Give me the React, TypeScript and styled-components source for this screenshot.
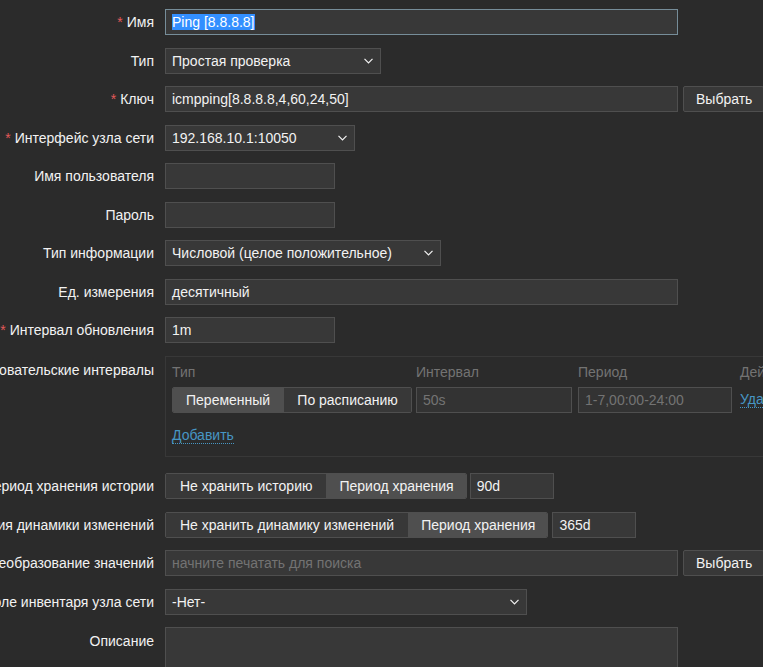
import React from "react";
import styled, { createGlobalStyle } from "styled-components";

const GlobalStyle = createGlobalStyle`
  html, body {
    margin: 0;
    padding: 0;
    background: #2b2b2b;
    overflow: hidden;
  }
  body {
    font-family: "Liberation Sans", Arial, sans-serif;
    font-size: 14px;
    color: #f2f2f2;
  }
  * { box-sizing: border-box; }
`;

const Form = styled.div`
  display: grid;
  grid-template-columns: 154px 1fr;
  column-gap: 11px;
  row-gap: 12.5px;
  padding-top: 9px;
  width: 763px;
`;

const Label = styled.div<{ $top?: boolean }>`
  display: flex;
  justify-content: flex-end;
  align-items: center;
  height: 26px;
  white-space: nowrap;
  color: #f2f2f2;
  align-self: ${(p) => (p.$top ? "start" : "center")};
  margin-top: ${(p) => (p.$top ? "1px" : "0")};
`;

const Req = styled.span`
  color: #e45959;
  margin-right: 4px;
`;

const Field = styled.div<{ $gap?: number }>`
  display: flex;
  align-items: center;
  gap: ${(p) => p.$gap ?? 5}px;
  min-width: 0;
`;

const TextBox = styled.div<{ $w: number; $focus?: boolean; $placeholder?: boolean }>`
  width: ${(p) => p.$w}px;
  height: 26px;
  flex: none;
  display: flex;
  align-items: center;
  padding: 0 6px;
  background: #383838;
  border: 1px solid ${(p) => (p.$focus ? "#768d99" : "#4f4f4f")};
  color: ${(p) => (p.$placeholder ? "#737373" : "#f2f2f2")};
  white-space: nowrap;
  overflow: hidden;
`;

const Selected = styled.span`
  background: #338fff;
  color: #ffffff;
`;

const SelectBox = styled.div<{ $w: number }>`
  width: ${(p) => p.$w}px;
  height: 26px;
  flex: none;
  display: flex;
  align-items: center;
  justify-content: space-between;
  padding: 0 7px 0 6px;
  background: #383838;
  border: 1px solid #4f4f4f;
  color: #f2f2f2;
  white-space: nowrap;
`;

const Button = styled.div`
  height: 26px;
  flex: none;
  display: flex;
  align-items: center;
  padding: 0 11px 0 12px;
  background: #383838;
  border: 1px solid #4f4f4f;
  border-radius: 2px;
  color: #f2f2f2;
  white-space: nowrap;
`;

const Segmented = styled.div`
  display: flex;
  flex: none;
  height: 26px;
  border: 1px solid #4f4f4f;
  border-radius: 2px;
  overflow: hidden;
`;

const Segment = styled.div<{ $on?: boolean; $pad?: number; $grow?: boolean }>`
  display: flex;
  align-items: center;
  justify-content: center;
  flex: ${(p) => (p.$grow ? "1 1 auto" : "none")};
  padding: 0 ${(p) => p.$pad ?? 13}px;
  background: ${(p) => (p.$on ? "#4f4f4f" : "#383838")};
  color: #f2f2f2;
  white-space: nowrap;
  & + & {
    border-left: 1px solid #4f4f4f;
  }
`;

const IntervalBox = styled.div`
  width: 620px;
  height: 101px;
  border: 1px solid #383838;
  padding: 6px 0 0 6px;
  margin-bottom: 4px;
  display: grid;
  grid-template-columns: 240px 156px 156px 60px;
  column-gap: 4px;
  grid-template-rows: 19px 26px auto;
  row-gap: 5px;
  align-items: center;
  overflow: hidden;
`;

const HeadCell = styled.div<{ $ml?: number }>`
  color: #737373;
  white-space: nowrap;
  margin-left: ${(p) => p.$ml ?? 0}px;
`;

const DisabledBox = styled.div<{ $ml?: number }>`
  height: 26px;
  display: flex;
  align-items: center;
  padding: 0 6px;
  margin-left: ${(p) => p.$ml ?? 0}px;
  background: #333333;
  border: 1px solid #4f4f4f;
  color: #737373;
  white-space: nowrap;
`;

const Link = styled.span<{ $ml?: number }>`
  color: #4796c4;
  border-bottom: 1px dotted #4796c4;
  line-height: 15px;
  margin-left: ${(p) => p.$ml ?? 0}px;
  white-space: nowrap;
  justify-self: start;
`;

const AddRow = styled.div`
  grid-column: 1 / -1;
  padding-top: 10px;
  align-self: start;
  display: flex;
`;

const TextArea = styled.div`
  width: 513px;
  height: 60px;
  background: #383838;
  border: 1px solid #4f4f4f;
`;

const Chevron = () => (
  <svg width="9" height="6" viewBox="0 0 9 6" style={{ flex: "none" }}>
    <polyline points="0.5,0.8 4.5,4.8 8.5,0.8" fill="none" stroke="#f2f2f2" strokeWidth="1.2" />
  </svg>
);

const Select = ({ w, children }: { w: number; children: React.ReactNode }) => (
  <SelectBox $w={w}>
    <span>{children}</span>
    <Chevron />
  </SelectBox>
);

export default function App() {
  return (
    <>
      <GlobalStyle />
      <Form>
        <Label><Req>*</Req>Имя</Label>
        <Field>
          <TextBox $w={513} $focus><Selected>Ping [8.8.8.8]</Selected></TextBox>
        </Field>

        <Label>Тип</Label>
        <Field><Select w={216}>Простая проверка</Select></Field>

        <Label><Req>*</Req>Ключ</Label>
        <Field>
          <TextBox $w={513}>icmpping[8.8.8.8,4,60,24,50]</TextBox>
          <Button>Выбрать</Button>
        </Field>

        <Label><Req>*</Req>Интерфейс узла сети</Label>
        <Field><Select w={190}>192.168.10.1:10050</Select></Field>

        <Label>Имя пользователя</Label>
        <Field><TextBox $w={170} /></Field>

        <Label>Пароль</Label>
        <Field><TextBox $w={170} /></Field>

        <Label>Тип информации</Label>
        <Field><Select w={276}>Числовой (целое положительное)</Select></Field>

        <Label>Ед. измерения</Label>
        <Field><TextBox $w={513}>десятичный</TextBox></Field>

        <Label><Req>*</Req>Интервал обновления</Label>
        <Field><TextBox $w={170}>1m</TextBox></Field>

        <Label $top>Пользовательские интервалы</Label>
        <IntervalBox>
          <HeadCell>Тип</HeadCell>
          <HeadCell>Интервал</HeadCell>
          <HeadCell $ml={2}>Период</HeadCell>
          <HeadCell $ml={4}>Действие</HeadCell>
          <Segmented>
            <Segment $on $pad={13}>Переменный</Segment>
            <Segment $grow $pad={11}>По расписанию</Segment>
          </Segmented>
          <DisabledBox>50s</DisabledBox>
          <DisabledBox $ml={2}>1-7,00:00-24:00</DisabledBox>
          <Link $ml={4}>Удалить</Link>
          <AddRow><Link>Добавить</Link></AddRow>
        </IntervalBox>

        <Label>Период хранения истории</Label>
        <Field $gap={3}>
          <Segmented>
            <Segment $pad={14}>Не хранить историю</Segment>
            <Segment $on $pad={12}>Период хранения</Segment>
          </Segmented>
          <TextBox $w={84}>90d</TextBox>
        </Field>

        <Label>Период хранения динамики изменений</Label>
        <Field $gap={4}>
          <Segmented>
            <Segment $pad={14}>Не хранить динамику изменений</Segment>
            <Segment $on $pad={12}>Период хранения</Segment>
          </Segmented>
          <TextBox $w={84}>365d</TextBox>
        </Field>

        <Label>Преобразование значений</Label>
        <Field>
          <TextBox $w={513} $placeholder>начните печатать для поиска</TextBox>
          <Button>Выбрать</Button>
        </Field>

        <Label>Поле инвентаря узла сети</Label>
        <Field><Select w={362}>-Нет-</Select></Field>

        <Label $top>Описание</Label>
        <Field><TextArea /></Field>
      </Form>
    </>
  );
}
